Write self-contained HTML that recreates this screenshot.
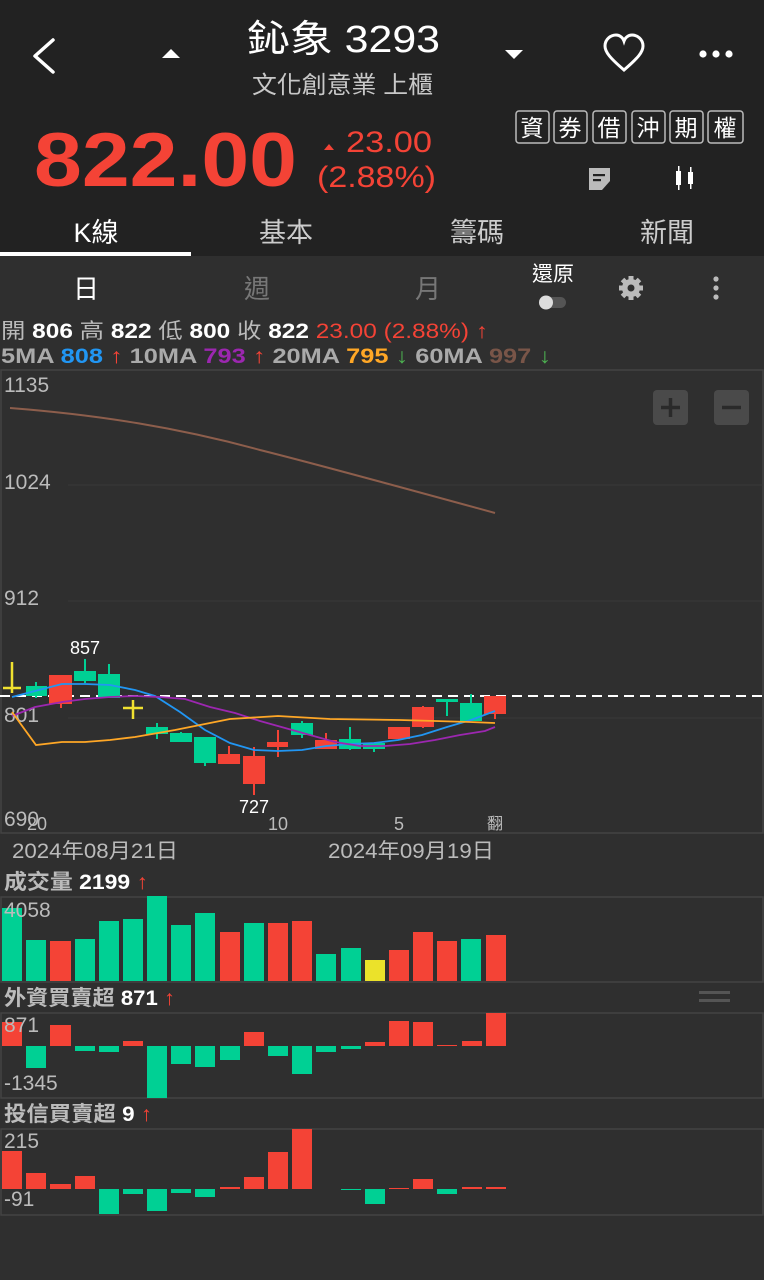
<!DOCTYPE html>
<html><head><meta charset="utf-8"><style>
html,body{margin:0;padding:0;background:#2f2f2f;width:764px;height:1280px;overflow:hidden}
svg{display:block}
text{font-family:"Liberation Sans","Noto Sans CJK TC",sans-serif}
</style></head><body>
<svg width="764" height="1280" viewBox="0 0 764 1280" xmlns="http://www.w3.org/2000/svg">
<rect x="0" y="0" width="764" height="1280" fill="#2f2f2f"/>
<rect x="0" y="0" width="764" height="256" fill="#222222"/>
<!-- header -->
<path d="M53 40 L35 56 L53 72" fill="none" stroke="#fff" stroke-width="3.5" stroke-linecap="round" stroke-linejoin="round"/>
<path d="M162 58 L180 58 L171 49 Z" fill="#fff"/>
<path d="M505 50 L523 50 L514 59 Z" fill="#fff"/>
<text x="247" y="52" fill="#fff" font-size="38" textLength="193" lengthAdjust="spacingAndGlyphs">鈊象 3293</text>
<text x="252" y="93" fill="#c8c8c8" font-size="24" textLength="181" lengthAdjust="spacingAndGlyphs">文化創意業 上櫃</text>
<path d="M624 70 C610 58 605 52 605 46 C605 39 611 35 616 35 C620 35 623 38 624 41 C625 38 628 35 632 35 C637 35 643 39 643 46 C643 52 638 58 624 70 Z" fill="none" stroke="#fff" stroke-width="3"/>
<circle cx="703" cy="54" r="3.6" fill="#fff"/><circle cx="716" cy="54" r="3.6" fill="#fff"/><circle cx="729" cy="54" r="3.6" fill="#fff"/>
<text x="34" y="186" fill="#f44336" font-size="76" font-weight="bold" textLength="263" lengthAdjust="spacingAndGlyphs">822.00</text>
<path d="M324 150 L334 150 L329 144 Z" fill="#f44336"/>
<text x="346" y="152" fill="#f44336" font-size="30" textLength="86" lengthAdjust="spacingAndGlyphs">23.00</text>
<text x="317" y="187" fill="#f44336" font-size="30" textLength="119" lengthAdjust="spacingAndGlyphs">(2.88%)</text>
<g fill="none" stroke="#bbb" stroke-width="1.5">
<rect x="516" y="111" width="33" height="32" rx="3"/><rect x="554" y="111" width="33" height="32" rx="3"/><rect x="593" y="111" width="33" height="32" rx="3"/><rect x="632" y="111" width="33" height="32" rx="3"/><rect x="670" y="111" width="33" height="32" rx="3"/><rect x="708" y="111" width="35" height="32" rx="3"/>
</g>
<g fill="#fff" font-size="23" text-anchor="middle">
<text x="532" y="136">資</text><text x="570" y="136">券</text><text x="609" y="136">借</text><text x="648" y="136">沖</text><text x="686" y="136">期</text><text x="725" y="136">權</text>
</g>
<path d="M589 168 h21 v13 l-8 9 h-13 z" fill="#bbb"/>
<rect x="593" y="174" width="12" height="2.2" fill="#222"/><rect x="593" y="179" width="8" height="2.2" fill="#222"/>
<rect x="676" y="171" width="5" height="14" fill="#fff"/><rect x="678" y="166" width="1.5" height="24" fill="#fff"/>
<rect x="688" y="172" width="5" height="12" fill="#fff"/><rect x="690" y="167" width="1.5" height="22" fill="#fff"/>
<text x="96" y="242" fill="#fff" font-size="27" text-anchor="middle">K線</text>
<text x="286" y="242" fill="#ccc" font-size="27" text-anchor="middle">基本</text>
<text x="477" y="242" fill="#ccc" font-size="27" text-anchor="middle">籌碼</text>
<text x="667" y="242" fill="#ccc" font-size="27" text-anchor="middle">新聞</text>
<rect x="0" y="252" width="191" height="4" fill="#fff"/>
<!-- period tabs -->
<text x="86" y="298" fill="#fff" font-size="26" text-anchor="middle">日</text>
<text x="257" y="298" fill="#777" font-size="26" text-anchor="middle">週</text>
<text x="428" y="298" fill="#777" font-size="26" text-anchor="middle">月</text>
<text x="553" y="281" fill="#fff" font-size="21" text-anchor="middle">還原</text>
<rect x="540" y="297" width="26" height="11" rx="5.5" fill="#555"/><circle cx="546" cy="302.5" r="7" fill="#ddd"/>
<g fill="#bbb"><circle cx="631" cy="288" r="9"/><g stroke="#bbb" stroke-width="5"><line x1="631" y1="276" x2="631" y2="300"/><line x1="619" y1="288" x2="643" y2="288"/><line x1="622.5" y1="279.5" x2="639.5" y2="296.5"/><line x1="622.5" y1="296.5" x2="639.5" y2="279.5"/></g><circle cx="631" cy="288" r="3.5" fill="#2f2f2f"/></g>
<circle cx="716" cy="279" r="2.6" fill="#bbb"/><circle cx="716" cy="288" r="2.6" fill="#bbb"/><circle cx="716" cy="297" r="2.6" fill="#bbb"/>
<!-- info lines -->
<text x="1" y="338" font-size="21" fill="#bbb" textLength="487" lengthAdjust="spacingAndGlyphs">開 <tspan fill="#fff" font-weight="bold">806</tspan> 高 <tspan fill="#fff" font-weight="bold">822</tspan> 低 <tspan fill="#fff" font-weight="bold">800</tspan> 收 <tspan fill="#fff" font-weight="bold">822</tspan>  <tspan fill="#f44336">23.00 (2.88%) ↑</tspan></text>
<text x="1" y="363" font-size="21" fill="#aaa" font-weight="bold" textLength="550" lengthAdjust="spacingAndGlyphs">5MA <tspan fill="#2196f3">808</tspan> <tspan fill="#f44336">↑</tspan>  10MA <tspan fill="#9c27b0">793</tspan> <tspan fill="#f44336">↑</tspan>  20MA <tspan fill="#ffa726">795</tspan> <tspan fill="#4caf50">↓</tspan>  60MA <tspan fill="#795548">997</tspan> <tspan fill="#4caf50">↓</tspan></text>
<!-- chart panel -->
<rect x="1" y="370" width="762" height="463" fill="none" stroke="#444" stroke-width="1.5"/>
<g stroke="#3a3a3a" stroke-width="1"><line x1="68" y1="485" x2="763" y2="485"/><line x1="68" y1="601" x2="763" y2="601"/><line x1="68" y1="718" x2="763" y2="718"/></g>
<g fill="#bbb" font-size="21"><text x="4" y="392">1135</text><text x="4" y="489">1024</text><text x="4" y="605">912</text><text x="4" y="722">801</text><text x="4" y="826">690</text></g>
<rect x="653" y="390" width="35" height="35" rx="4" fill="#4a4a4a"/><rect x="714" y="390" width="35" height="35" rx="4" fill="#4a4a4a"/>
<path d="M670.5 398 v19 M661 407.5 h19" stroke="#2a2a2a" stroke-width="3.5"/><path d="M722 407.5 h19" stroke="#2a2a2a" stroke-width="3.5"/>
<path d="M10 408 C100 415 180 428 260 450 C320 465 400 487 495 513" fill="none" stroke="#8d5e4c" stroke-width="2"/>
<line x1="0" y1="696" x2="764" y2="696" stroke="#fff" stroke-width="2" stroke-dasharray="10,6"/>
<!-- candles -->
<g fill="#00d094" stroke="#00d094" stroke-width="2">
<line x1="36" y1="682" x2="36" y2="698"/><rect x="27" y="687" width="19" height="8"/>
<line x1="85" y1="659" x2="85" y2="683"/><rect x="75" y="672" width="20" height="8"/>
<line x1="109" y1="664" x2="109" y2="697"/><rect x="99" y="675" width="20" height="22"/>
<line x1="157" y1="723" x2="157" y2="739"/><rect x="147" y="728" width="20" height="5"/>
<line x1="181" y1="732" x2="181" y2="741"/><rect x="171" y="734" width="20" height="7"/>
<line x1="205" y1="738" x2="205" y2="766"/><rect x="195" y="738" width="20" height="24"/>
<line x1="302" y1="721" x2="302" y2="738"/><rect x="292" y="724" width="20" height="10"/>
<line x1="350" y1="727" x2="350" y2="750"/><rect x="340" y="740" width="20" height="8"/>
<line x1="374" y1="744" x2="374" y2="752"/><rect x="364" y="744" width="20" height="4"/>
<line x1="447" y1="700" x2="447" y2="716"/><rect x="437" y="700" width="20" height="1"/>
<line x1="471" y1="694" x2="471" y2="720"/><rect x="461" y="704" width="20" height="16"/>
</g>
<g fill="#f44336" stroke="#f44336" stroke-width="2">
<line x1="61" y1="676" x2="61" y2="708"/><rect x="50" y="676" width="21" height="27"/>
<line x1="229" y1="746" x2="229" y2="763"/><rect x="219" y="755" width="20" height="8"/>
<line x1="254" y1="747" x2="254" y2="795"/><rect x="244" y="757" width="20" height="26"/>
<line x1="278" y1="730" x2="278" y2="757"/><rect x="268" y="743" width="19" height="3"/>
<line x1="326" y1="733" x2="326" y2="748"/><rect x="316" y="741" width="20" height="7"/>
<line x1="399" y1="728" x2="399" y2="738"/><rect x="389" y="728" width="20" height="10"/>
<line x1="423" y1="706" x2="423" y2="728"/><rect x="413" y="708" width="20" height="18"/>
<line x1="495" y1="697" x2="495" y2="719"/><rect x="485" y="697" width="20" height="16"/>
</g>
<g stroke="#f0e130" stroke-width="2.5"><line x1="12" y1="662" x2="12" y2="693"/><line x1="3" y1="688" x2="21" y2="688"/><line x1="133" y1="700" x2="133" y2="719"/><line x1="123" y1="708" x2="143" y2="708"/></g>
<polyline fill="none" stroke="#2196f3" stroke-width="1.8" points="12,697 35,691 62,684 85,684 110,685 135,690 155,696 180,712 205,730 230,743 254,750 278,751 302,750 326,746 350,744 374,743 398,740 422,735 447,727 471,720 495,711"/>
<polyline fill="none" stroke="#9c27b0" stroke-width="1.8" points="12,716 35,707 62,702 85,699 110,697 135,696 160,697 185,699 210,707 235,713 260,721 285,728 310,735 335,742 360,746 385,746 410,744 435,740 460,735 485,731 495,727"/>
<polyline fill="none" stroke="#ffa726" stroke-width="1.8" points="12,712 36,745 62,742 85,742 110,740 135,737 175,730 230,719 278,716 330,719 400,720 470,722 495,723"/>
<g fill="#fff" font-size="18" text-anchor="middle"><text x="85" y="654">857</text><text x="254" y="813">727</text></g>
<g fill="#bbb" font-size="18" text-anchor="middle"><text x="37" y="830">20</text><text x="278" y="830">10</text><text x="399" y="830">5</text><text x="495" y="829" font-size="16">翻</text></g>
<g fill="#bbb" font-size="21"><text x="12" y="858" textLength="166" lengthAdjust="spacingAndGlyphs">2024年08月21日</text><text x="328" y="858" textLength="166" lengthAdjust="spacingAndGlyphs">2024年09月19日</text></g>
<!-- volume -->
<text x="4" y="889" font-size="21" fill="#bbb" font-weight="bold" textLength="144" lengthAdjust="spacingAndGlyphs">成交量 <tspan fill="#fff">2199</tspan> <tspan fill="#f44336">↑</tspan></text>
<rect x="1" y="897" width="762" height="85" fill="none" stroke="#444" stroke-width="1.5"/>
<g fill="#00d094"><rect x="2" y="908" width="20" height="73"/><rect x="26" y="940" width="20" height="41"/><rect x="75" y="939" width="20" height="42"/><rect x="99" y="921" width="20" height="60"/><rect x="123" y="919" width="20" height="62"/><rect x="147" y="896" width="20" height="85"/><rect x="171" y="925" width="20" height="56"/><rect x="195" y="913" width="20" height="68"/><rect x="244" y="923" width="20" height="58"/><rect x="316" y="954" width="20" height="27"/><rect x="341" y="948" width="20" height="33"/><rect x="461" y="939" width="20" height="42"/></g>
<g fill="#f44336"><rect x="50" y="941" width="21" height="40"/><rect x="220" y="932" width="20" height="49"/><rect x="268" y="923" width="20" height="58"/><rect x="292" y="921" width="20" height="60"/><rect x="389" y="950" width="20" height="31"/><rect x="413" y="932" width="20" height="49"/><rect x="437" y="941" width="20" height="40"/><rect x="486" y="935" width="20" height="46"/></g>
<rect x="365" y="960" width="20" height="21" fill="#ebe22a"/>
<text x="4" y="917" font-size="21" fill="#bbb">4058</text>
<!-- foreign -->
<text x="4" y="1005" font-size="21" fill="#bbb" font-weight="bold" textLength="171" lengthAdjust="spacingAndGlyphs">外資買賣超 <tspan fill="#fff">871</tspan> <tspan fill="#f44336">↑</tspan></text>
<rect x="699" y="991" width="31" height="3" fill="#555"/><rect x="699" y="999" width="31" height="3" fill="#555"/>
<rect x="1" y="1013" width="762" height="85" fill="none" stroke="#444" stroke-width="1.5"/>
<g fill="#f44336"><rect x="2" y="1022" width="20" height="24"/><rect x="50" y="1025" width="21" height="21"/><rect x="123" y="1041" width="20" height="5"/><rect x="244" y="1032" width="20" height="14"/><rect x="365" y="1042" width="20" height="4"/><rect x="389" y="1021" width="20" height="25"/><rect x="413" y="1022" width="20" height="24"/><rect x="437" y="1045" width="20" height="1"/><rect x="462" y="1041" width="20" height="5"/><rect x="486" y="1013" width="20" height="33"/></g>
<g fill="#00d094"><rect x="26" y="1046" width="20" height="22"/><rect x="75" y="1046" width="20" height="5"/><rect x="99" y="1046" width="20" height="6"/><rect x="147" y="1046" width="20" height="52"/><rect x="171" y="1046" width="20" height="18"/><rect x="195" y="1046" width="20" height="21"/><rect x="220" y="1046" width="20" height="14"/><rect x="268" y="1046" width="20" height="10"/><rect x="292" y="1046" width="20" height="28"/><rect x="316" y="1046" width="20" height="6"/><rect x="341" y="1046" width="20" height="3"/></g>
<g font-size="21" fill="#bbb"><text x="4" y="1032">871</text><text x="4" y="1090">-1345</text></g>
<!-- trust -->
<text x="4" y="1121" font-size="21" fill="#bbb" font-weight="bold" textLength="148" lengthAdjust="spacingAndGlyphs">投信買賣超 <tspan fill="#fff">9</tspan> <tspan fill="#f44336">↑</tspan></text>
<rect x="1" y="1129" width="762" height="86" fill="none" stroke="#444" stroke-width="1.5"/>
<g fill="#f44336"><rect x="2" y="1151" width="20" height="38"/><rect x="26" y="1173" width="20" height="16"/><rect x="50" y="1184" width="21" height="5"/><rect x="75" y="1176" width="20" height="13"/><rect x="220" y="1187" width="20" height="2"/><rect x="244" y="1177" width="20" height="12"/><rect x="268" y="1152" width="20" height="37"/><rect x="292" y="1129" width="20" height="60"/><rect x="389" y="1188" width="20" height="1"/><rect x="413" y="1179" width="20" height="10"/><rect x="462" y="1187" width="20" height="2"/><rect x="486" y="1187" width="20" height="2"/></g>
<g fill="#00d094"><rect x="99" y="1189" width="20" height="25"/><rect x="123" y="1189" width="20" height="5"/><rect x="147" y="1189" width="20" height="22"/><rect x="171" y="1189" width="20" height="4"/><rect x="195" y="1189" width="20" height="8"/><rect x="341" y="1189" width="20" height="1"/><rect x="365" y="1189" width="20" height="15"/><rect x="437" y="1189" width="20" height="5"/></g>
<g font-size="21" fill="#bbb"><text x="4" y="1148">215</text><text x="4" y="1206">-91</text></g>
</svg>
</body></html>
